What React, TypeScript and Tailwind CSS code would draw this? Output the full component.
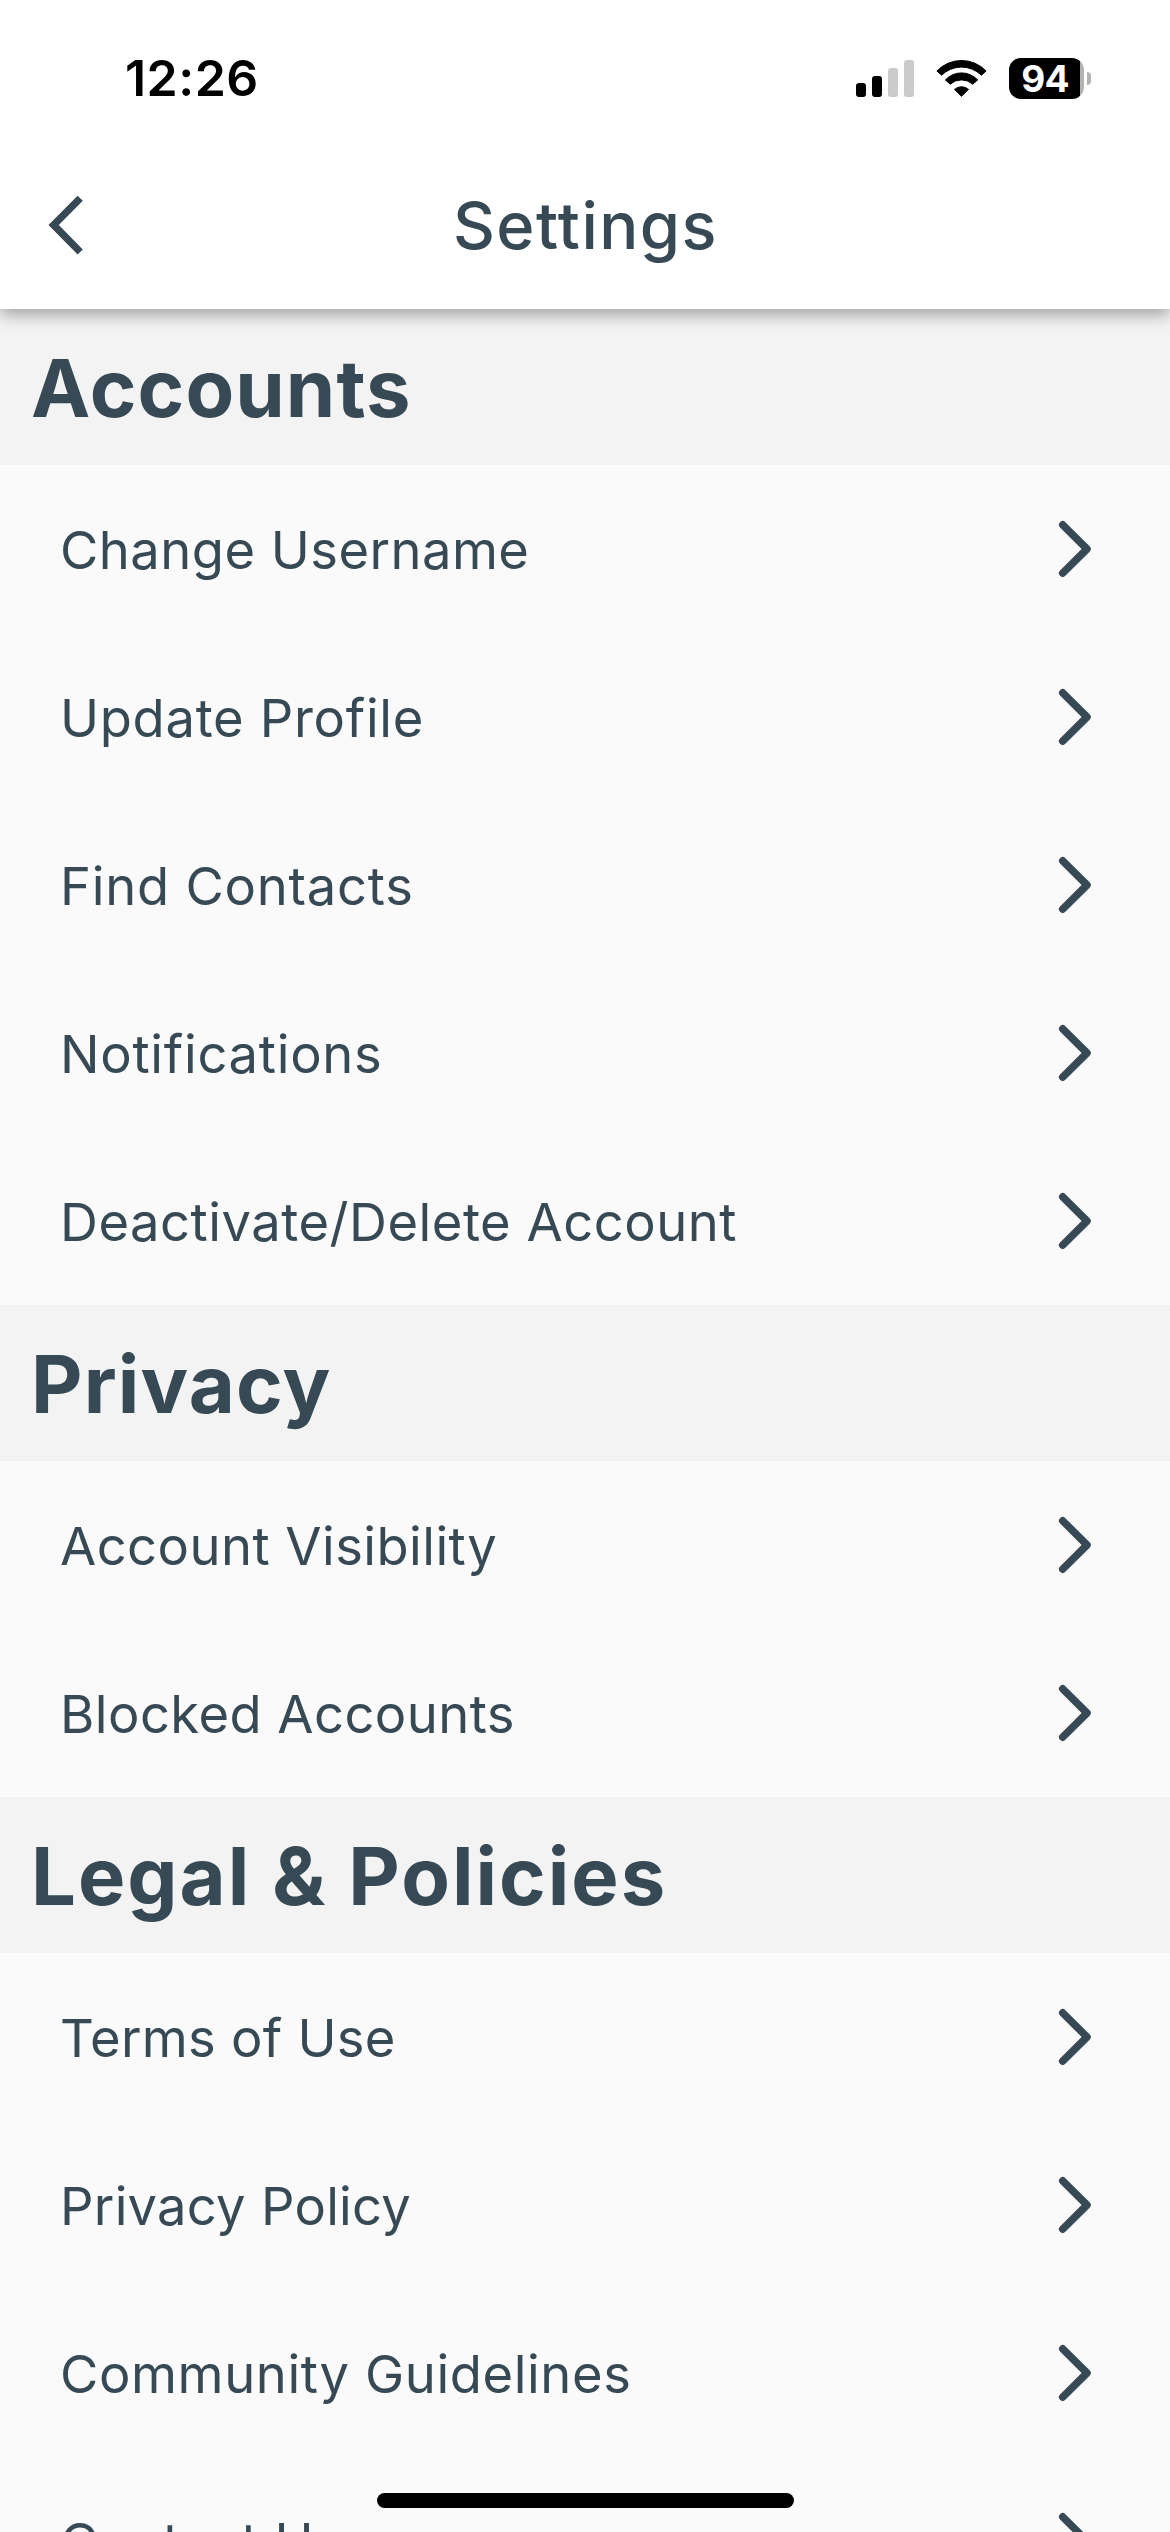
type Item = { label: string; tracking: string };
type Section = { title: string; tracking: string; items: Item[] };

const sections: Section[] = [
  {
    title: "Accounts",
    tracking: "tracking-[1.1px]",
    items: [
      { label: "Change Username", tracking: "tracking-[0.46px]" },
      { label: "Update Profile", tracking: "tracking-[0.7px]" },
      { label: "Find Contacts", tracking: "tracking-[0.76px]" },
      { label: "Notifications", tracking: "tracking-[0.72px]" },
      { label: "Deactivate/Delete Account", tracking: "tracking-[0.52px]" },
    ],
  },
  {
    title: "Privacy",
    tracking: "tracking-[1.2px]",
    items: [
      { label: "Account Visibility", tracking: "tracking-[0.45px]" },
      { label: "Blocked Accounts", tracking: "tracking-[0.45px]" },
    ],
  },
  {
    title: "Legal & Policies",
    tracking: "tracking-[2px]",
    items: [
      { label: "Terms of Use", tracking: "tracking-[0.26px]" },
      { label: "Privacy Policy", tracking: "tracking-[0.26px]" },
      { label: "Community Guidelines", tracking: "tracking-[0.6px]" },
      { label: "Contact Us", tracking: "tracking-[0.6px]" },
    ],
  },
];

function SignalIcon() {
  return (
    <svg width="58" height="37" viewBox="0 0 58 37" className="mr-[22px]">
      <rect x="0" y="23" width="10" height="14" rx="3" fill="#000" />
      <rect x="16" y="16" width="10" height="21" rx="3" fill="#000" />
      <rect x="32" y="8" width="10" height="29" rx="3" fill="#cbcbcb" />
      <rect x="48" y="0" width="10" height="37" rx="3" fill="#cbcbcb" />
    </svg>
  );
}

function WifiIcon() {
  return (
    <svg width="51" height="37" viewBox="0 0 51 37" className="mr-[22px]">
      <g fill="#000" stroke="#000" strokeWidth="1" strokeLinejoin="round">
        <path d="M0.9 11 A34 34 0 0 1 50.1 11 L45.4 15.2 A28.5 28.5 0 0 0 5.6 15.2 Z" />
        <path d="M9.4 19.9 A22 22 0 0 1 41.6 19.9 L36.8 24.2 A17 17 0 0 0 14.2 24.2 Z" />
        <path d="M18.5 29.4 A10.5 10.5 0 0 1 32.5 29.4 L25.5 36.3 Z" />
      </g>
    </svg>
  );
}

function Battery({ level }: { level: number }) {
  return (
    <div className="flex items-center gap-[3px]">
      <div className="flex h-[41px] w-[75px] items-center justify-center rounded-[12px] bg-[linear-gradient(to_right,#000_71px,#b3b3b3_71px)] pr-[3px] text-[37px] leading-[41px] font-bold tracking-[-0.8px] text-white">
        {level}
      </div>
      <div className="h-[13px] w-1 rounded-r-full bg-[#b3b3b3]" />
    </div>
  );
}

function ChevronRight() {
  return (
    <svg width="34" height="58" viewBox="0 0 34 58" fill="none">
      <path
        d="M4.7 4.8 L29 29 L4.7 53.2"
        stroke="#364954"
        strokeWidth="7.5"
        strokeLinecap="round"
        strokeLinejoin="round"
      />
    </svg>
  );
}

export default function App() {
  return (
    <div className="relative flex h-[2532px] w-[1170px] flex-col overflow-hidden bg-[#fafafa] font-['Inter',sans-serif] text-[#364954]">
      <header className="relative z-10 h-[309px] shrink-0 bg-white shadow-[0_6px_15px_0_rgba(0,0,0,0.33)]">
        <div className="flex h-[141px] items-center justify-between pt-[15px] pr-[79px] pl-[125px] text-black">
          <span className="text-[50px] leading-none font-semibold tracking-[0.48px]">12:26</span>
          <div className="flex items-center">
            <SignalIcon />
            <WifiIcon />
            <Battery level={94} />
          </div>
        </div>
        <div className="grid h-[168px] grid-cols-[1fr_auto_1fr] items-center pl-12">
          <button aria-label="Back" className="w-9">
            <svg width="36" height="60" viewBox="0 0 36 60" fill="#364954">
              <path d="M0.5 30 L29.6 0.7 L34.8 5.7 L10.8 30 L34.8 54.4 L29.6 59.4 Z" />
            </svg>
          </button>
          <h1 className="mr-[47px] text-[65px] leading-none font-medium tracking-[1.48px]">Settings</h1>
        </div>
      </header>

      <main>
        {sections.map((section) => (
          <section key={section.title}>
            <div className="flex h-[156px] items-center bg-[#f3f3f3] pt-[3px] pl-[31px]">
              <h2 className={`text-[79.5px] leading-none font-bold ${section.tracking}`}>{section.title}</h2>
            </div>
            <ul>
              {section.items.map((item) => (
                <li key={item.label} className="flex h-[168px] items-center justify-between pr-[78px] pl-[60px]">
                  <span className={`pt-0.5 text-[52.5px] leading-none ${item.tracking}`}>{item.label}</span>
                  <ChevronRight />
                </li>
              ))}
            </ul>
          </section>
        ))}
      </main>

      <div className="absolute top-[2493px] left-[377px] z-20 h-[15px] w-[417px] rounded-full bg-black" />
    </div>
  );
}
